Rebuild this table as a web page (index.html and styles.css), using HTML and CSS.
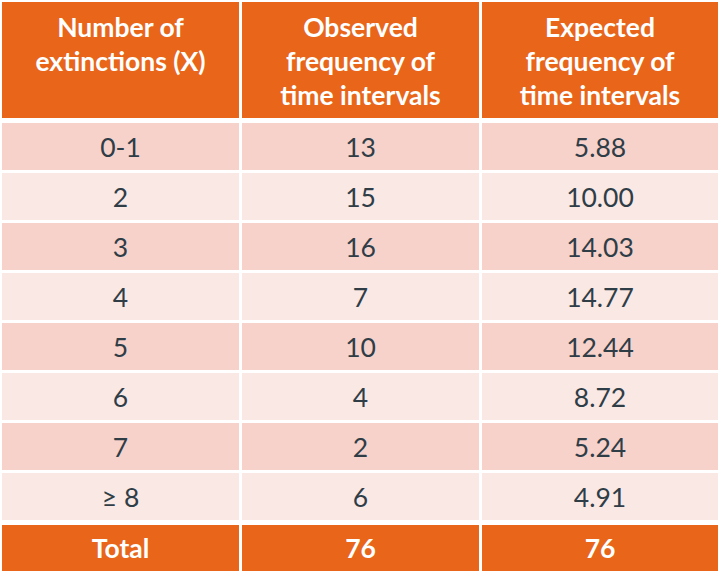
FILE: index.html
```html
<!DOCTYPE html>
<html>
<head>
<meta charset="utf-8">
<link rel="stylesheet" href="styles.css">
</head>
<body>
<div class="table">
  <div class="row head">
    <div class="cell">Number of<br>extinctions (X)</div>
    <div class="cell">Observed<br>frequency of<br>time intervals</div>
    <div class="cell">Expected<br>frequency of<br>time intervals</div>
  </div>
  <div class="body">
    <div class="row odd"><div class="cell">0-1</div><div class="cell">13</div><div class="cell">5.88</div></div>
    <div class="row even"><div class="cell">2</div><div class="cell">15</div><div class="cell">10.00</div></div>
    <div class="row odd"><div class="cell">3</div><div class="cell">16</div><div class="cell">14.03</div></div>
    <div class="row even"><div class="cell">4</div><div class="cell">7</div><div class="cell">14.77</div></div>
    <div class="row odd"><div class="cell">5</div><div class="cell">10</div><div class="cell">12.44</div></div>
    <div class="row even"><div class="cell">6</div><div class="cell">4</div><div class="cell">8.72</div></div>
    <div class="row odd"><div class="cell">7</div><div class="cell">2</div><div class="cell">5.24</div></div>
    <div class="row even"><div class="cell">≥ 8</div><div class="cell">6</div><div class="cell">4.91</div></div>
  </div>
  <div class="row total">
    <div class="cell">Total</div>
    <div class="cell">76</div>
    <div class="cell">76</div>
  </div>
</div>
</body>
</html>
```
FILE: styles.css
```css
html, body {
  margin: 0;
  padding: 0;
  background: #ffffff;
}
body {
  padding: 2px 0 0 2px;
  font-family: "Lato", "Open Sans", sans-serif;
}
.table {
  width: 716px;
  display: flex;
  flex-direction: column;
  gap: 5px;
}
.body {
  display: flex;
  flex-direction: column;
  gap: 3px;
}
.row {
  display: grid;
  grid-template-columns: 237px 237px 236px;
  column-gap: 3px;
}
.cell {
  text-align: center;
  font-size: 26.5px;
  line-height: 34px;
}
.head .cell {
  background: #e8651a;
  color: #ffffff;
  font-weight: 700;
  height: 116px;
  box-sizing: border-box;
  padding-top: 8px;
}
.body .cell {
  height: 47px;
  line-height: 48px;
  color: #2f3d47;
}
.odd .cell {
  background: #f7d2cb;
}
.even .cell {
  background: #fae8e5;
}
.total .cell {
  background: #e8651a;
  color: #ffffff;
  font-weight: 700;
  height: 46px;
  line-height: 46px;
}
```
